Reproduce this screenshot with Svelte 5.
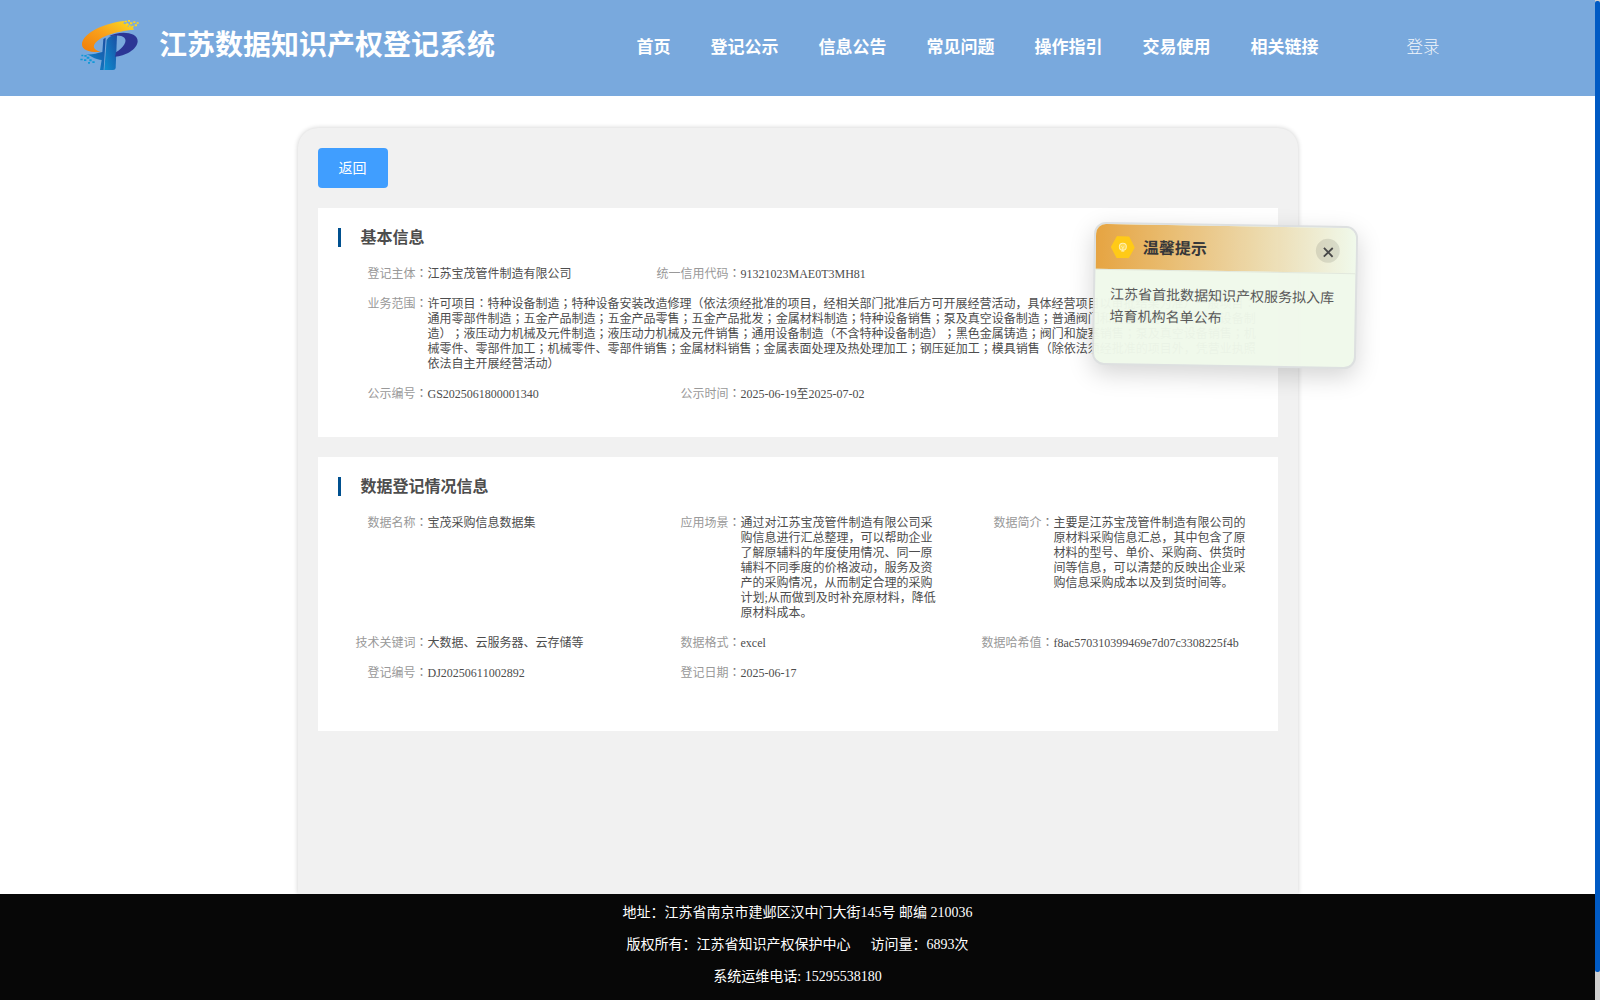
<script>
  const nav = ['首页', '登记公示', '信息公告', '常见问题', '操作指引', '交易使用', '相关链接'];

  // Splits a line so that full-width colons and semicolons can be set centred.
  const pieces = (line) => line.split(/([：；])/).filter(Boolean);

  const sections = [
    {
      title: '基本信息',
      size: 'short',
      fields: [
        { label: '登记主体', lines: ['江苏宝茂管件制造有限公司'] },
        { label: '统一信用代码', lines: ['91321023MAE0T3MH81'] },
        {
          label: '业务范围',
          wide: true,
          lines: [
            '许可项目：特种设备制造；特种设备安装改造修理（依法须经批准的项目，经相关部门批准后方可开展经营活动，具体经营项目以审批结果为准）一般项目：',
            '通用零部件制造；五金产品制造；五金产品零售；五金产品批发；金属材料制造；特种设备销售；泵及真空设备制造；普通阀门和旋塞制造（不含特种设备制',
            '造）；液压动力机械及元件制造；液压动力机械及元件销售；通用设备制造（不含特种设备制造）；黑色金属铸造；阀门和旋塞销售；泵及真空设备销售；机',
            '械零件、零部件加工；机械零件、零部件销售；金属材料销售；金属表面处理及热处理加工；钢压延加工；模具销售（除依法须经批准的项目外，凭营业执照',
            '依法自主开展经营活动）'
          ]
        },
        { label: '公示编号', lines: ['GS2025061800001340'] },
        { label: '公示时间', lines: ['2025-06-19至2025-07-02'] }
      ]
    },
    {
      title: '数据登记情况信息',
      size: 'tall',
      fields: [
        { label: '数据名称', lines: ['宝茂采购信息数据集'] },
        {
          label: '应用场景',
          lines: [
            '通过对江苏宝茂管件制造有限公司采',
            '购信息进行汇总整理，可以帮助企业',
            '了解原辅料的年度使用情况、同一原',
            '辅料不同季度的价格波动，服务及资',
            '产的采购情况，从而制定合理的采购',
            '计划;从而做到及时补充原材料，降低',
            '原材料成本。'
          ]
        },
        {
          label: '数据简介',
          lines: [
            '主要是江苏宝茂管件制造有限公司的',
            '原材料采购信息汇总，其中包含了原',
            '材料的型号、单价、采购商、供货时',
            '间等信息，可以清楚的反映出企业采',
            '购信息采购成本以及到货时间等。'
          ]
        },
        { label: '技术关键词', lines: ['大数据、云服务器、云存储等'] },
        { label: '数据格式', lines: ['excel'] },
        { label: '数据哈希值', lines: ['f8ac570310399469e7d07c3308225f4b'] },
        { label: '登记编号', lines: ['DJ20250611002892'] },
        { label: '登记日期', lines: ['2025-06-17'] }
      ]
    }
  ];
</script>

<div class="screen">
  <div class="page">
    <header>
      <svg class="logo" viewBox="0 0 240 210" aria-hidden="true">
        <defs>
          <linearGradient id="gold" x1="0" y1="1" x2="1" y2="0">
            <stop offset="0" stop-color="#f07c08" />
            <stop offset="0.5" stop-color="#f9a01b" />
            <stop offset="1" stop-color="#fbdc20" />
          </linearGradient>
          <linearGradient id="stem" x1="0" y1="1" x2="1" y2="0">
            <stop offset="0" stop-color="#0d8fd0" />
            <stop offset="1" stop-color="#1b4ea3" />
          </linearGradient>
        </defs>
        <path fill="url(#gold)" d="M164 33C115 36 35 67 36 104C37 120 60 128 92 126C76 121 67 113 74 102C88 80 135 64 192 59L188 51L172 50L178 43L160 41Z" />
        <path fill="#fbd51f" d="M164 32h7v5h-7zM174 30h6v5h-6zM168 40h7v5h-7zM180 37h7v6h-7zM190 34h6v5h-6zM184 47h7v5h-7zM194 43h7v6h-7zM200 37h6v4h-6zM176 46h6v5h-6z" />
        <path fill="url(#stem)" d="M100 87L107 83L101 180H90L95 150C78 149 68 142 57 136L48 133C66 134 82 130 97 126Z" />
        <path fill="#1199d8" d="M34 134h6v5h-6zM43 135h7v5h-7zM50 140h8v6h-8zM31 146h7v5h-7zM42 148h7v5h-7zM58 148h7v6h-7zM67 154h7v5h-7zM54 156h6v5h-6z" />
        <path fill="url(#stem)" d="M110 90C116 80 126 76 141 75L137 174Q136 180 129 180H103Z" />
        <path fill="#2c3695" d="M117 79C145 62 204 64 203 94C202 119 164 139 135 140L138 127C161 111 173 94 163 83C155 75 137 75 117 79Z" />
      </svg>
      <h1>江苏数据知识产权登记系统</h1>
      <nav>
        {#each nav as item}<a href="#top">{item}</a>{/each}
      </nav>
      <a class="login" href="#login">登录</a>
    </header>

    <main>
      <button class="back">返回</button>
      {#each sections as section}
        <section class={section.size}>
          <h2>{section.title}</h2>
          <div class="fields">
            {#each section.fields as field}
              <div class="field" class:wide={field.wide}>
                <div class="label">{field.label}<span class="mid">：</span></div>
                <div class="value">
                  {#each field.lines as line}
                    <div>{#each pieces(line) as part}{#if part === '：' || part === '；'}<span class="mid">{part}</span>{:else}{part}{/if}{/each}</div>
                  {/each}
                </div>
              </div>
            {/each}
          </div>
        </section>
      {/each}
    </main>

    <footer>
      <p>地址：江苏省南京市建邺区汉中门大街145号 邮编 210036</p>
      <p>版权所有：江苏省知识产权保护中心<span class="visits">访问量：6893次</span></p>
      <p>系统运维电话: 15295538180</p>
    </footer>
  </div>
  <div class="scroll"><div class="thumb"></div></div>

  <aside>
    <div class="tip-head">
      <svg class="hex" viewBox="0 0 24 22" aria-hidden="true">
        <path fill="#ffc910" d="M6 0H18L24 11L18 22H6L0 11Z" />
        <circle cx="12" cy="10.5" r="3.5" fill="#ffd84a" stroke="#fff0b0" />
        <path d="M10.5 10l1.5 1.5 1.5-1.5M12 11.5v3M10.5 15h3" fill="none" stroke="#fff3c0" stroke-width=".8" />
      </svg>
      <strong>温馨提示</strong>
      <button class="close" aria-label="关闭">
        <svg viewBox="0 0 12 12" aria-hidden="true"><path d="M1.2 1.2L10.8 10.8M10.8 1.2L1.2 10.8" /></svg>
      </button>
    </div>
    <div class="tip-body">江苏省首批数据知识产权服务拟入库<br />培育机构名单公布</div>
  </aside>
</div>

<style>
  :global(body) {
    overflow: hidden;
  }
  .screen {
    position: relative;
    display: flex;
    width: 1600px;
    height: 1000px;
    overflow: hidden;
    background: #fff;
    font-family: 'Liberation Serif', 'Noto Sans CJK SC', serif;
    text-spacing-trim: space-all;
    font-kerning: none;
  }
  .page {
    display: flex;
    flex-direction: column;
    width: 1595px;
    height: 1000px;
  }
  header {
    display: flex;
    flex: none;
    height: 96px;
    background: #79a9dd;
    color: #fff;
  }
  .logo {
    width: 80px;
    height: 70px;
    margin: 10px 0 0 70px;
  }
  h1 {
    margin: 0 0 0 9px;
    width: 477.5px;
    font-size: 28px;
    line-height: 91px;
    font-weight: 700;
    white-space: nowrap;
  }
  nav {
    display: flex;
    gap: 40px;
  }
  a {
    color: #fff;
    text-decoration: none;
    font-size: 17px;
    line-height: 95px;
    font-weight: 700;
    white-space: nowrap;
  }
  .login {
    margin-left: 88px;
    font-size: 16.5px;
    font-weight: 300;
    opacity: 0.9;
  }
  main {
    box-sizing: border-box;
    flex: 1;
    min-height: 0;
    width: 1000px;
    margin: 32px auto 0;
    padding: 20px;
    border-radius: 20px 20px 0 0;
    background: #f1f1f1;
    box-shadow: 0 0 5px rgba(0, 0, 0, 0.2);
  }
  .back {
    display: block;
    width: 70px;
    height: 40px;
    padding: 0 0 2px;
    border: 0;
    border-radius: 4px;
    background: #409eff;
    color: #fff;
    font: 14px 'Noto Sans CJK SC', sans-serif;
  }
  section {
    box-sizing: border-box;
    margin-top: 20px;
    padding: 20px 0 0 20px;
    background: #fff;
  }
  .short {
    height: 229px;
  }
  .tall {
    height: 274px;
  }
  h2 {
    margin: 0;
    padding-left: 20px;
    border-left: 3px solid #00508f;
    color: #4d4d4d;
    font-size: 16px;
    line-height: 19px;
    font-weight: 700;
  }
  .fields {
    display: grid;
    grid-template-columns: repeat(3, 313px);
    row-gap: 15px;
    margin-top: 20px;
    color: #4d4d4d;
    font-size: 12px;
    line-height: 15px;
  }
  .field {
    display: flex;
  }
  .wide {
    grid-column: 1 / -1;
  }
  .label {
    flex: none;
    width: 90px;
    text-align: right;
    color: #999;
  }
  .mid {
    font-family: 'Noto Sans CJK JP', sans-serif;
    line-height: 0;
  }
  .label .mid {
    color: #777;
  }
  .value div,
  .label {
    height: 15px;
    white-space: nowrap;
  }
  footer {
    box-sizing: border-box;
    flex: none;
    height: 106px;
    padding-top: 3px;
    background: #070707;
    color: #fff;
    font-size: 14px;
    text-align: center;
  }
  p {
    margin: 0;
    height: 32px;
    line-height: 32px;
  }
  .visits {
    margin-left: 20px;
  }
  .scroll {
    width: 5px;
    background: #cfcfcf;
  }
  .thumb {
    height: 971px;
    margin-top: 1px;
    border-radius: 2px;
    background: #005ac4;
  }
  aside {
    position: absolute;
    left: 1093px;
    top: 223.5px;
    box-sizing: border-box;
    width: 264px;
    height: 143px;
    overflow: hidden;
    border: 2px solid #dcdfe0;
    border-radius: 12px;
    background: #f0f9eb;
    box-shadow: 0 8px 25px rgba(0, 0, 0, 0.17);
    opacity: 0.97;
    transform: rotate(1deg);
  }
  .tip-head {
    display: flex;
    align-items: center;
    box-sizing: border-box;
    height: 46px;
    padding: 0 16px 0 15px;
    border-bottom: 1px solid #e2e8dc;
    background: linear-gradient(90deg, #e6a23c, #f0f9eb);
  }
  .hex {
    width: 24px;
    height: 22px;
  }
  strong {
    flex: 1;
    margin-left: 8px;
    padding-top: 2px;
    color: #303133;
    font-size: 16px;
    line-height: 24px;
  }
  .close {
    display: flex;
    align-items: center;
    justify-content: center;
    width: 24px;
    height: 24px;
    padding: 0;
    border: 0;
    border-radius: 50%;
    background: rgba(0, 0, 0, 0.1);
  }
  .close svg {
    width: 11px;
    height: 11px;
    margin-top: 3px;
  }
  .close path {
    fill: none;
    stroke: #444;
    stroke-width: 2;
  }
  .tip-body {
    padding: 14px 0 0 15px;
    color: #555;
    font-size: 14px;
    line-height: 22px;
    white-space: nowrap;
  }
</style>
